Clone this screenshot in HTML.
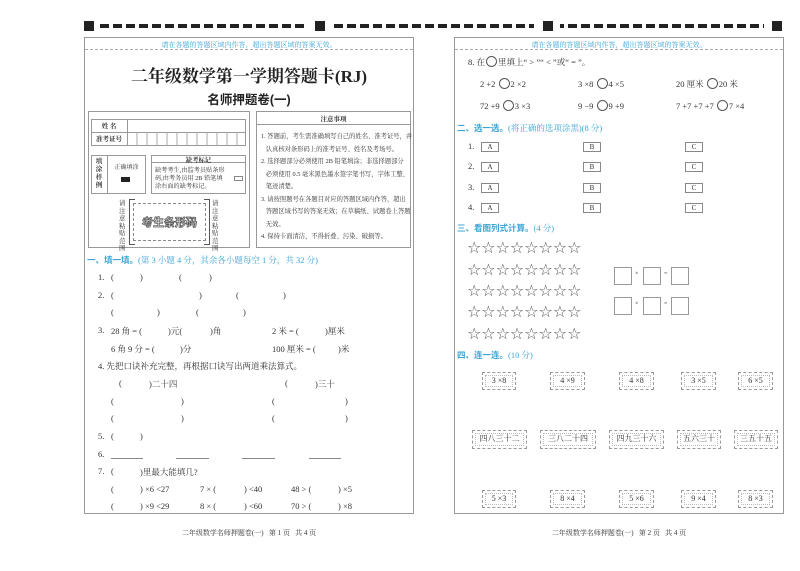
<!DOCTYPE html>
<html><head><meta charset="utf-8"><style>
*{margin:0;padding:0;box-sizing:border-box}
body{width:800px;height:571px;background:#fff;position:relative;overflow:hidden;font-family:"Liberation Serif","Noto Serif CJK SC",serif;color:#333;font-size:8.5px}
.a{position:absolute;white-space:nowrap}
.b{position:absolute;border:1px solid #999}
.blue{color:#3aa6d6}
.h{font-family:"Liberation Sans","Noto Sans CJK SC",sans-serif;font-weight:bold;color:#3aa6d6;font-size:8.5px}
.h span{font-weight:normal;font-family:"Liberation Serif","Noto Serif CJK SC",serif}
.c{display:inline-block;width:11px;height:11px;border:1px solid #555;border-radius:50%;vertical-align:-2px;margin:0 1px}
.opt{position:absolute;width:18px;height:10px;border:1px solid #888;font-size:7px;text-align:center;line-height:8px}
.st{position:absolute;border:1.5px dashed #999;outline:1px dotted #bbb;outline-offset:-4px;text-align:center;font-size:8px;line-height:16px}
.sq{position:absolute;width:18px;height:18px;border:1px solid #999}
.stars{position:absolute;left:467px;font-size:16px;line-height:16px;font-family:"DejaVu Sans",sans-serif;color:#555}
.stars i{display:inline-block;width:14.3px;font-style:normal;text-align:center}
.nt{font-size:6.3px;line-height:12.5px}
</style></head><body>
<svg class="a" style="left:0;top:0" width="800" height="40">
<defs><pattern id="p" x="100" y="0" width="13" height="40" patternUnits="userSpaceOnUse"><rect x="0" y="24" width="9" height="4" fill="#222"/></pattern></defs>
<rect x="84" y="21" width="10" height="10" fill="#222"/>
<rect x="100" y="20" width="206" height="10" fill="url(#p)"/>
<rect x="315" y="21" width="10" height="10" fill="#222"/>
<rect x="333" y="20" width="201" height="10" fill="url(#p)"/>
<rect x="543" y="21" width="10" height="10" fill="#222"/>
<rect x="560" y="20" width="204" height="10" fill="url(#p)"/>
<rect x="772" y="21" width="10" height="10" fill="#222"/>
</svg>

<!-- LEFT PANEL -->
<div class="b" style="left:84px;top:37px;width:330px;height:477px"></div>
<div class="a blue" style="left:84px;width:330px;top:40px;text-align:center;font-size:7px">请在各题的答题区域内作答，超出答题区域的答案无效。</div>
<div class="a" style="left:85px;top:49px;width:328px;border-top:1px dashed #aaa"></div>
<div class="a" style="left:84px;width:330px;top:62px;text-align:center;font-size:17px;font-weight:bold;color:#222">二年级数学第一学期答题卡(RJ)</div>
<div class="a" style="left:84px;width:330px;top:89px;text-align:center;font-size:12.5px;font-weight:bold;font-family:'Liberation Sans','Noto Sans CJK SC',sans-serif;color:#222">名师押题卷(一)</div>

<div class="b" style="left:88px;top:111px;width:162px;height:137px"></div>
<div class="b" style="left:91px;top:119px;width:155px;height:27px"></div>
<div class="a" style="left:91px;top:132px;width:155px;border-top:1px solid #999"></div>
<div class="a" style="left:127px;top:119px;height:27px;border-left:1px solid #999"></div>
<div class="a" style="left:91px;width:36px;top:121px;text-align:center;font-size:6.5px;font-weight:bold">姓 名</div>
<div class="a" style="left:91px;width:36px;top:134px;text-align:center;font-size:6.5px;font-weight:bold">准考证号</div>
<svg class="a" style="left:127px;top:132px" width="119" height="14"><g stroke="#aaa"><line x1="10" y1="0" x2="10" y2="14"/><line x1="20" y1="0" x2="20" y2="14"/><line x1="30" y1="0" x2="30" y2="14"/><line x1="40" y1="0" x2="40" y2="14"/><line x1="50" y1="0" x2="50" y2="14"/><line x1="60" y1="0" x2="60" y2="14"/><line x1="70" y1="0" x2="70" y2="14"/><line x1="80" y1="0" x2="80" y2="14"/><line x1="90" y1="0" x2="90" y2="14"/><line x1="100" y1="0" x2="100" y2="14"/><line x1="110" y1="0" x2="110" y2="14"/></g></svg>

<div class="b" style="left:91px;top:155px;width:55px;height:39px"></div>
<div class="a" style="left:107px;top:155px;height:39px;border-left:1px solid #999"></div>
<div class="a" style="left:92px;top:158px;width:14px;font-size:6.5px;line-height:8px;white-space:normal;text-align:center;font-weight:bold">填<br>涂<br>样<br>例</div>
<div class="a" style="left:107px;width:39px;top:162px;text-align:center;font-size:6px">正确填涂</div>
<div class="a" style="left:121px;top:177px;width:9px;height:5px;background:#222"></div>
<div class="b" style="left:151px;top:155px;width:95px;height:39px"></div>
<div class="a" style="left:151px;top:162px;width:95px;border-top:1px solid #999"></div>
<div class="a" style="left:151px;width:95px;top:155px;text-align:center;font-size:6.3px;font-weight:bold">缺考标记</div>
<div class="a" style="left:155px;top:167px;font-size:6.2px;line-height:8px">缺考考生,由监考员贴条形<br>码,由考务员用 2B 铅笔填<br>涂右面的缺考标记。</div>
<div class="a" style="left:234px;top:176px;width:9px;height:5px;border:1px solid #888"></div>

<div class="a" style="left:129px;top:199px;width:81px;height:46px;border:1.5px solid #555;border-top:none;border-bottom:none"></div>
<div class="a" style="left:129px;top:199px;width:6px;border-top:1.5px solid #555"></div>
<div class="a" style="left:129px;top:244px;width:6px;border-top:1.5px solid #555"></div>
<div class="a" style="left:204px;top:199px;width:6px;border-top:1.5px solid #555"></div>
<div class="a" style="left:204px;top:244px;width:6px;border-top:1.5px solid #555"></div>
<div class="a" style="left:133px;top:203px;width:73px;height:38px;border:1px dashed #888"></div>
<div class="a" style="left:133px;width:73px;top:214px;text-align:center;font-size:11px;font-weight:bold;color:#fff;-webkit-text-stroke:0.8px #555;font-family:'Liberation Sans','Noto Sans CJK SC',sans-serif">考生条形码</div>
<div class="a" style="left:119px;top:200px;font-size:6.5px;line-height:7.5px;white-space:normal;width:8px">请<br>注<br>意<br>粘<br>贴<br>范<br>围</div>
<div class="a" style="left:212px;top:200px;font-size:6.5px;line-height:7.5px;white-space:normal;width:8px">请<br>注<br>意<br>粘<br>贴<br>范<br>围</div>

<div class="b" style="left:256px;top:111px;width:155px;height:137px"></div>
<div class="a" style="left:256px;top:124px;width:155px;border-top:1px solid #999"></div>
<div class="a" style="left:256px;width:155px;top:114px;text-align:center;font-size:6.5px;font-weight:bold">注意事项</div>
<div class="a nt" style="left:261px;top:131px">1. 答题前，考生需准确填写自己的姓名、准考证号，并<br>&nbsp;&nbsp;&nbsp;认真核对条形码上的准考证号、姓名及考场号。<br>2. 选择题部分必须使用 2B 铅笔填涂；非选择题部分<br>&nbsp;&nbsp;&nbsp;必须使用 0.5 毫米黑色墨水签字笔书写，字体工整、<br>&nbsp;&nbsp;&nbsp;笔迹清楚。<br>3. 请按照题号在各题目对应的答题区域内作答，超出<br>&nbsp;&nbsp;&nbsp;答题区域书写的答案无效；在草稿纸、试题卷上答题<br>&nbsp;&nbsp;&nbsp;无效。<br>4. 保持卡面清洁，不得折叠、污染、破损等。</div>

<div class="a h" style="left:87px;top:254px">一、填一填。<span>(第 3 小题 4 分，其余各小题每空 1 分，共 32 分)</span></div>
<div class="a" style="left:98px;top:272px">1.</div><div class="a" style="left:111px;top:272px">(</div><div class="a" style="left:140px;top:272px">)</div><div class="a" style="left:179px;top:272px">(</div><div class="a" style="left:209px;top:272px">)</div>
<div class="a" style="left:98px;top:290px">2.</div><div class="a" style="left:111px;top:290px">(</div><div class="a" style="left:199px;top:290px">)</div><div class="a" style="left:236px;top:290px">(</div><div class="a" style="left:283px;top:290px">)</div>
<div class="a" style="left:111px;top:307px">(</div><div class="a" style="left:157px;top:307px">)</div><div class="a" style="left:196px;top:307px">(</div><div class="a" style="left:243px;top:307px">)</div>
<div class="a" style="left:98px;top:325px">3.</div><div class="a" style="left:111px;top:325px">28 角 = (</div><div class="a" style="left:168px;top:325px">)元(</div><div class="a" style="left:210px;top:325px">)角</div><div class="a" style="left:272px;top:325px">2 米 = (</div><div class="a" style="left:325px;top:325px">)厘米</div>
<div class="a" style="left:111px;top:343px">6 角 9 分 = (</div><div class="a" style="left:180px;top:343px">)分</div><div class="a" style="left:272px;top:343px">100 厘米 = (</div><div class="a" style="left:338px;top:343px">)米</div>
<div class="a" style="left:98px;top:360px">4. 先把口诀补充完整，再根据口诀写出两道乘法算式。</div>
<div class="a" style="left:119px;top:378px">(</div><div class="a" style="left:149px;top:378px">)二十四</div><div class="a" style="left:285px;top:378px">(</div><div class="a" style="left:315px;top:378px">)三十</div>
<div class="a" style="left:111px;top:396px">(</div><div class="a" style="left:181px;top:396px">)</div><div class="a" style="left:272px;top:396px">(</div><div class="a" style="left:345px;top:396px">)</div>
<div class="a" style="left:111px;top:413px">(</div><div class="a" style="left:181px;top:413px">)</div><div class="a" style="left:272px;top:413px">(</div><div class="a" style="left:345px;top:413px">)</div>
<div class="a" style="left:98px;top:431px">5.</div><div class="a" style="left:111px;top:431px">(</div><div class="a" style="left:140px;top:431px">)</div>
<div class="a" style="left:98px;top:449px">6.</div>
<div class="a" style="left:111px;top:458px;width:32px;border-top:1px solid #888"></div><div class="a" style="left:176px;top:458px;width:33px;border-top:1px solid #888"></div><div class="a" style="left:242px;top:458px;width:33px;border-top:1px solid #888"></div><div class="a" style="left:309px;top:458px;width:32px;border-top:1px solid #888"></div>
<div class="a" style="left:98px;top:466px">7.</div><div class="a" style="left:111px;top:466px">(</div><div class="a" style="left:140px;top:466px">)里最大能填几?</div>
<div class="a" style="left:111px;top:484px">(</div><div class="a" style="left:140px;top:484px">) ×6 &lt;27</div><div class="a" style="left:200px;top:484px">7 × (</div><div class="a" style="left:244px;top:484px">) &lt;40</div><div class="a" style="left:291px;top:484px">48 &gt; (</div><div class="a" style="left:338px;top:484px">) ×5</div>
<div class="a" style="left:111px;top:501px">(</div><div class="a" style="left:140px;top:501px">) ×9 &lt;29</div><div class="a" style="left:200px;top:501px">8 × (</div><div class="a" style="left:244px;top:501px">) &lt;60</div><div class="a" style="left:291px;top:501px">70 &gt; (</div><div class="a" style="left:338px;top:501px">) ×8</div>

<div class="a" style="left:84px;width:330px;top:528px;text-align:center;font-size:7px">二年级数学名师押题卷(一)&nbsp;&nbsp;&nbsp;第 1 页&nbsp;&nbsp;&nbsp;共 4 页</div>

<!-- RIGHT PANEL -->
<div class="b" style="left:454px;top:37px;width:330px;height:477px"></div>
<div class="a blue" style="left:454px;width:330px;top:40px;text-align:center;font-size:7px">请在各题的答题区域内作答，超出答题区域的答案无效。</div>
<div class="a" style="left:455px;top:49px;width:328px;border-top:1px dashed #aaa"></div>
<div class="a" style="left:468px;top:56px">8. 在<span class="c"></span>里填上“ &gt; ”“ &lt; ”或“ = ”。</div>
<div class="a" style="left:480px;top:78px">2 +2 <span class="c"></span>2 ×2</div>
<div class="a" style="left:578px;top:78px">3 ×8 <span class="c"></span>4 ×5</div>
<div class="a" style="left:676px;top:78px">20 厘米 <span class="c"></span>20 米</div>
<div class="a" style="left:480px;top:100px">72 +9 <span class="c"></span>3 ×3</div>
<div class="a" style="left:578px;top:100px">9 −9 <span class="c"></span>9 +9</div>
<div class="a" style="left:676px;top:100px">7 +7 +7 +7 <span class="c"></span>7 ×4</div>

<div class="a h" style="left:457px;top:122px">二、选一选。<span>(将正确的选项涂黑)(8 分)</span></div>
<div class="a" style="left:468px;top:141px">1.</div><div class="opt" style="left:481px;top:142px">A</div><div class="opt" style="left:583px;top:142px">B</div><div class="opt" style="left:685px;top:142px">C</div>
<div class="a" style="left:468px;top:161px">2.</div><div class="opt" style="left:481px;top:162px">A</div><div class="opt" style="left:583px;top:162px">B</div><div class="opt" style="left:685px;top:162px">C</div>
<div class="a" style="left:468px;top:182px">3.</div><div class="opt" style="left:481px;top:183px">A</div><div class="opt" style="left:583px;top:183px">B</div><div class="opt" style="left:685px;top:183px">C</div>
<div class="a" style="left:468px;top:202px">4.</div><div class="opt" style="left:481px;top:203px">A</div><div class="opt" style="left:583px;top:203px">B</div><div class="opt" style="left:685px;top:203px">C</div>

<div class="a h" style="left:457px;top:222px">三、看图列式计算。<span>(4 分)</span></div>
<div class="a stars" style="top:240px"><i>☆</i><i>☆</i><i>☆</i><i>☆</i><i>☆</i><i>☆</i><i>☆</i><i>☆</i></div>
<div class="a stars" style="top:262px"><i>☆</i><i>☆</i><i>☆</i><i>☆</i><i>☆</i><i>☆</i><i>☆</i><i>☆</i></div>
<div class="a stars" style="top:283px"><i>☆</i><i>☆</i><i>☆</i><i>☆</i><i>☆</i><i>☆</i><i>☆</i><i>☆</i></div>
<div class="a stars" style="top:304px"><i>☆</i><i>☆</i><i>☆</i><i>☆</i><i>☆</i><i>☆</i><i>☆</i><i>☆</i></div>
<div class="a stars" style="top:326px"><i>☆</i><i>☆</i><i>☆</i><i>☆</i><i>☆</i><i>☆</i><i>☆</i><i>☆</i></div>
<div class="sq" style="left:614px;top:267px"></div><div class="a" style="left:635px;top:271px;font-size:6px">×</div><div class="sq" style="left:643px;top:267px"></div><div class="a" style="left:664px;top:271px;font-size:6px">=</div><div class="sq" style="left:671px;top:267px"></div>
<div class="sq" style="left:614px;top:297px"></div><div class="a" style="left:635px;top:301px;font-size:6px">×</div><div class="sq" style="left:643px;top:297px"></div><div class="a" style="left:664px;top:301px;font-size:6px">=</div><div class="sq" style="left:671px;top:297px"></div>

<div class="a h" style="left:457px;top:349px">四、连一连。<span>(10 分)</span></div>
<div class="st" style="left:482px;top:372px;width:34px;height:18px">3 ×8</div>
<div class="st" style="left:550px;top:372px;width:35px;height:18px">4 ×9</div>
<div class="st" style="left:619px;top:372px;width:35px;height:18px">4 ×8</div>
<div class="st" style="left:681px;top:372px;width:35px;height:18px">3 ×5</div>
<div class="st" style="left:738px;top:372px;width:35px;height:18px">6 ×5</div>
<div class="st" style="left:472px;top:430px;width:55px;height:19px">四八三十二</div>
<div class="st" style="left:540px;top:430px;width:56px;height:19px">三八二十四</div>
<div class="st" style="left:609px;top:430px;width:55px;height:19px">四九三十六</div>
<div class="st" style="left:677px;top:430px;width:44px;height:19px">五六三十</div>
<div class="st" style="left:734px;top:430px;width:44px;height:19px">三五十五</div>
<div class="st" style="left:482px;top:490px;width:34px;height:18px">5 ×3</div>
<div class="st" style="left:550px;top:490px;width:35px;height:18px">8 ×4</div>
<div class="st" style="left:619px;top:490px;width:35px;height:18px">5 ×6</div>
<div class="st" style="left:681px;top:490px;width:35px;height:18px">9 ×4</div>
<div class="st" style="left:738px;top:490px;width:35px;height:18px">8 ×3</div>

<div class="a" style="left:454px;width:330px;top:528px;text-align:center;font-size:7px">二年级数学名师押题卷(一)&nbsp;&nbsp;&nbsp;第 2 页&nbsp;&nbsp;&nbsp;共 4 页</div>
</body></html>
